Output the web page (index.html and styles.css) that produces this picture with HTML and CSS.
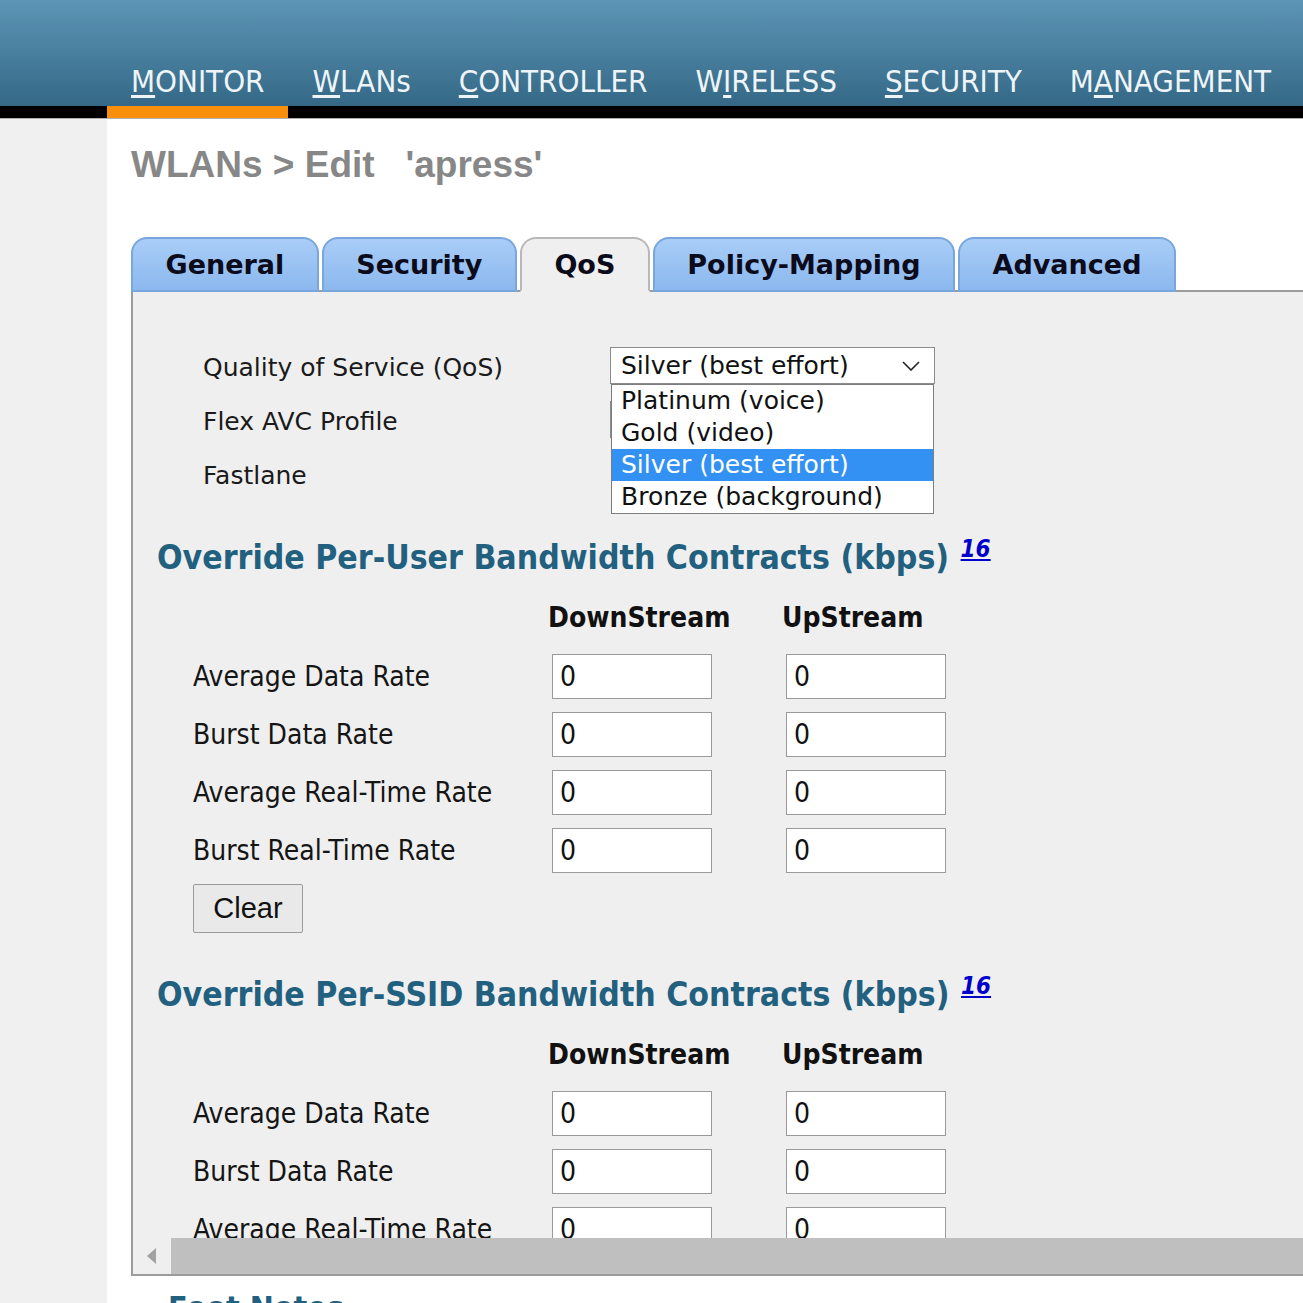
FILE: index.html
```html
<!DOCTYPE html>
<html lang="en">
<head>
<meta charset="utf-8">
<title>WLANs &gt; Edit 'apress'</title>
<link rel="stylesheet" href="styles.css">
</head>
<body>
<header class="topbar">
  <nav class="mainnav">
    <a class="navitem active"><u>M</u>ONITOR</a>
    <a class="navitem"><u>W</u>LANs</a>
    <a class="navitem"><u>C</u>ONTROLLER</a>
    <a class="navitem">W<u>I</u>RELESS</a>
    <a class="navitem"><u>S</u>ECURITY</a>
    <a class="navitem">M<u>A</u>NAGEMENT</a>
  </nav>
</header>
<div class="layout">
  <aside class="sidebar"></aside>
  <main class="content">
    <h1 class="page-title">WLANs &gt; Edit &nbsp; 'apress'</h1>
    <div class="tabs">
      <div class="tab">General</div>
      <div class="tab">Security</div>
      <div class="tab active">QoS</div>
      <div class="tab">Policy-Mapping</div>
      <div class="tab">Advanced</div>
    </div>
    <section class="panel">
      <div class="panel-body">
        <div class="qos-grid">
          <div class="qos-label">Quality of Service (QoS)</div>
          <div class="qos-field">
            <div class="select-wrap">
              <div class="select">
                <span>Silver (best effort)</span>
                <svg class="chev" width="18" height="10" viewBox="0 0 18 10"><path d="M1 1 L9 9 L17 1" fill="none" stroke="#222" stroke-width="1.6"/></svg>
              </div>
              <div class="dropdown">
                <div class="option">Platinum (voice)</div>
                <div class="option">Gold (video)</div>
                <div class="option selected">Silver (best effort)</div>
                <div class="option">Bronze (background)</div>
              </div>
            </div>
          </div>
          <div class="qos-label">Flex AVC Profile</div>
          <div class="qos-field"><div class="select under"></div></div>
          <div class="qos-label">Fastlane</div>
          <div class="qos-field"></div>
        </div>

        <h2 class="section-title">Override Per-User Bandwidth Contracts (kbps) <sup class="note"><a>16</a></sup></h2>
        <div class="bw-grid">
          <div class="col-head"></div><div class="col-head">DownStream</div><div class="col-head">UpStream</div>
          <div class="bw-label">Average Data Rate</div><input class="bw-input" type="text" value="0"><input class="bw-input" type="text" value="0">
          <div class="bw-label">Burst Data Rate</div><input class="bw-input" type="text" value="0"><input class="bw-input" type="text" value="0">
          <div class="bw-label">Average Real-Time Rate</div><input class="bw-input" type="text" value="0"><input class="bw-input" type="text" value="0">
          <div class="bw-label">Burst Real-Time Rate</div><input class="bw-input" type="text" value="0"><input class="bw-input" type="text" value="0">
        </div>
        <button class="btn" type="button">Clear</button>

        <h2 class="section-title second">Override Per-SSID Bandwidth Contracts (kbps) <sup class="note"><a>16</a></sup></h2>
        <div class="bw-grid">
          <div class="col-head"></div><div class="col-head">DownStream</div><div class="col-head">UpStream</div>
          <div class="bw-label">Average Data Rate</div><input class="bw-input" type="text" value="0"><input class="bw-input" type="text" value="0">
          <div class="bw-label">Burst Data Rate</div><input class="bw-input" type="text" value="0"><input class="bw-input" type="text" value="0">
          <div class="bw-label">Average Real-Time Rate</div><input class="bw-input" type="text" value="0"><input class="bw-input" type="text" value="0">
          <div class="bw-label">Burst Real-Time Rate</div><input class="bw-input" type="text" value="0"><input class="bw-input" type="text" value="0">
        </div>
      </div>
      <div class="hscroll">
        <div class="hscroll-btn"><span class="arrow-left"></span></div>
        <div class="hscroll-thumb"></div>
      </div>
    </section>
    <h2 class="foot-title">Foot Notes</h2>
  </main>
</div>
</body>
</html>
```

FILE: styles.css
```css
html, body {
  margin: 0;
  padding: 0;
  overflow: hidden;
}
body {
  width: 1303px;
  background: #ffffff;
  color: #111111;
  font-family: "DejaVu Sans", Verdana, sans-serif;
}

/* header */
.topbar {
  height: 106px;
  background: linear-gradient(#5d95b6, #346886);
  border-bottom: 12px solid #000000;
  display: flex;
  align-items: flex-end;
  padding-left: 107px;
}
.mainnav {
  display: flex;
  margin-bottom: -12px;
}
.navitem {
  padding: 0 24px;
  height: 50px;
  line-height: 50px;
  border-bottom: 12px solid transparent;
  color: #eef4f8;
  font-family: "DejaVu Sans Condensed", "DejaVu Sans", sans-serif;
  font-size: 31px;
  text-decoration: none;
  white-space: nowrap;
}
.navitem.active {
  border-bottom-color: #fa8f0c;
}
.navitem u {
  text-underline-offset: 3px;
}

/* layout */
.layout {
  display: flex;
  border-top: 1px solid #b0b0b0;
  min-height: 1200px;
}
.sidebar {
  width: 107px;
  flex: none;
  background: #f0f0f0;
}
.content {
  flex: 1;
  min-width: 0;
  padding-left: 24px;
}
.page-title {
  margin: 0 0 50px;
  padding-top: 24px;
  font: bold 37px/44px "Liberation Sans", Arial, sans-serif;
  color: #878787;
  white-space: nowrap;
}

/* tabs */
.tabs {
  display: flex;
  gap: 3px;
  position: relative;
  z-index: 1;
  margin-bottom: -2px;
}
.tab {
  box-sizing: border-box;
  height: 55px;
  padding: 0 32.5px;
  border: 2px solid #78a6dd;
  border-radius: 16px 16px 0 0;
  background: linear-gradient(#a9cdf7, #8bb8ee);
  font: bold 27px/51px "DejaVu Sans", Verdana, sans-serif;
  color: #0b0b1c;
  white-space: nowrap;
}
.tab.active {
  background: #efefef;
  border-color: #b8b8b8;
  border-bottom-color: #efefef;
}

/* panel */
.panel {
  box-sizing: border-box;
  width: 1320px;
  border: 2px solid #9c9c9c;
  background: #efefef;
}
.panel-body {
  height: 946px;
  overflow: hidden;
}
.qos-grid {
  display: grid;
  grid-template-columns: 407px 325px;
  grid-auto-rows: 54px;
  align-items: center;
  padding: 48px 0 0 70px;
}
.qos-label {
  font-size: 25px;
  color: #1a1a1a;
  white-space: nowrap;
}
.qos-field {
  align-self: start;
  padding-top: 7px;
}
.select-wrap {
  position: relative;
}
.select {
  box-sizing: border-box;
  width: 325px;
  height: 37px;
  border: 1px solid #8c8c8c;
  background: #ffffff;
  display: flex;
  align-items: center;
  justify-content: space-between;
  padding: 0 14px 0 10px;
  font-size: 25px;
  color: #111111;
  white-space: nowrap;
}
.select.under {
  width: 323px;
}
.chev {
  flex: none;
}
.dropdown {
  position: absolute;
  top: 37px;
  left: 1px;
  width: 323px;
  box-sizing: border-box;
  border: 1px solid #7d7d7d;
  background: #ffffff;
  z-index: 5;
}
.option {
  height: 32px;
  line-height: 32px;
  padding-left: 9px;
  font-size: 25px;
  color: #111111;
  white-space: nowrap;
}
.option.selected {
  background: #3391f4;
  color: #ffffff;
}

/* sections */
.section-title {
  margin: 27px 0 0 24px;
  font: bold 33.5px/40px "DejaVu Sans Condensed", "DejaVu Sans", sans-serif;
  color: #22607f;
  white-space: nowrap;
}
.section-title.second {
  margin-top: 33px;
}
.note {
  font-size: 24px;
  font-style: italic;
  vertical-align: 12px;
  margin-left: 1px;
}
.note a {
  color: #0000cc;
  text-decoration: underline;
}
.bw-grid {
  display: grid;
  grid-template-columns: 359px 234px 160px;
  row-gap: 13px;
  padding-left: 60px;
  margin-top: 22px;
}
.col-head {
  height: 41px;
  margin-left: -4px;
  font: bold 28px/36px "DejaVu Sans Condensed", "DejaVu Sans", sans-serif;
  color: #111111;
  white-space: nowrap;
}
.bw-label {
  font: 28px/45px "DejaVu Sans Condensed", "DejaVu Sans", sans-serif;
  color: #151515;
  white-space: nowrap;
}
.bw-input {
  box-sizing: border-box;
  width: 160px;
  height: 45px;
  margin: 0;
  border: 1px solid #9a9a9a;
  background: #ffffff;
  padding: 0 0 0 7px;
  font: 28px "DejaVu Sans Condensed", "DejaVu Sans", sans-serif;
  color: #111111;
}
.btn {
  display: block;
  margin: 11px 0 0 60px;
  box-sizing: border-box;
  width: 110px;
  height: 49px;
  border: 1px solid #9b9b9b;
  border-radius: 2px;
  background: #e9e9e9;
  font: 29px "Liberation Sans", Arial, sans-serif;
  color: #111111;
  padding: 0;
}

/* scrollbar */
.hscroll {
  display: flex;
  height: 36px;
}
.hscroll-btn {
  width: 38px;
  flex: none;
  display: flex;
  align-items: center;
  background: #efefef;
}
.arrow-left {
  width: 0;
  height: 0;
  margin-left: 14px;
  border-top: 8px solid transparent;
  border-bottom: 8px solid transparent;
  border-right: 9px solid #a3a3a3;
}
.hscroll-thumb {
  flex: 1;
  background: #bfbfbf;
}

.foot-title {
  margin: 12px 0 0 37px;
  font: bold 32px/40px "DejaVu Sans Condensed", "DejaVu Sans", sans-serif;
  color: #22607f;
}
```
